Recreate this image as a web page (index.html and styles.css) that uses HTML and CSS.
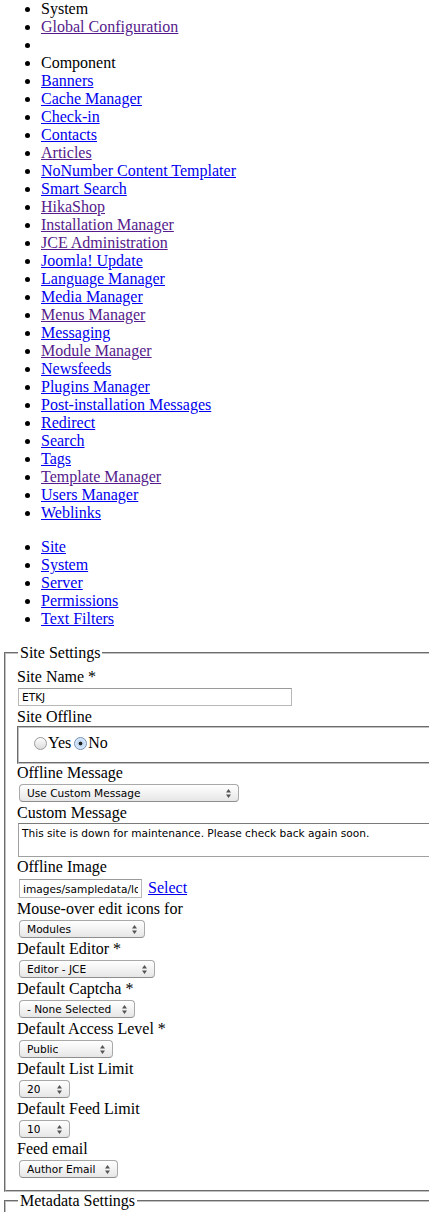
FILE: index.html
```html
<!DOCTYPE html>
<html>
<head>
<meta charset="utf-8">
<title>Global Configuration</title>
<link rel="stylesheet" href="styles.css">
</head>
<body>
<ul class="menu">
  <li>System</li>
  <li><a class="visited" href="#">Global Configuration</a></li>
  <li class="empty"></li>
  <li>Component</li>
  <li><a href="#">Banners</a></li>
  <li><a href="#">Cache Manager</a></li>
  <li><a href="#">Check-in</a></li>
  <li><a href="#">Contacts</a></li>
  <li><a class="visited" href="#">Articles</a></li>
  <li><a href="#">NoNumber Content Templater</a></li>
  <li><a href="#">Smart Search</a></li>
  <li><a class="visited" href="#">HikaShop</a></li>
  <li><a class="visited" href="#">Installation Manager</a></li>
  <li><a class="visited" href="#">JCE Administration</a></li>
  <li><a href="#">Joomla! Update</a></li>
  <li><a href="#">Language Manager</a></li>
  <li><a href="#">Media Manager</a></li>
  <li><a class="visited" href="#">Menus Manager</a></li>
  <li><a href="#">Messaging</a></li>
  <li><a class="visited" href="#">Module Manager</a></li>
  <li><a href="#">Newsfeeds</a></li>
  <li><a href="#">Plugins Manager</a></li>
  <li><a href="#">Post-installation Messages</a></li>
  <li><a href="#">Redirect</a></li>
  <li><a href="#">Search</a></li>
  <li><a href="#">Tags</a></li>
  <li><a class="visited" href="#">Template Manager</a></li>
  <li><a href="#">Users Manager</a></li>
  <li><a href="#">Weblinks</a></li>
</ul>

<ul class="tabs">
  <li><a href="#">Site</a></li>
  <li><a href="#">System</a></li>
  <li><a href="#">Server</a></li>
  <li><a href="#">Permissions</a></li>
  <li><a href="#">Text Filters</a></li>
</ul>

<fieldset class="group">
  <legend>Site Settings</legend>

  <div class="label">Site Name *</div>
  <input class="text w-name" type="text" value="ETKJ">

  <div class="label">Site Offline</div>
  <fieldset class="radios">
    <input class="radio" type="radio" name="offline"><label>Yes</label><input class="radio" type="radio" name="offline" checked><label>No</label>
  </fieldset>

  <div class="label">Offline Message</div>
  <div class="select w-220"><span>Use Custom Message</span><svg class="arrows" width="5" height="9" viewBox="0 0 5 9"><path d="M0 3.5 L2.5 0 L5 3.5 Z M0 5.5 L2.5 9 L5 5.5 Z" fill="#555"/></svg></div>

  <div class="label">Custom Message</div>
  <div class="textarea">This site is down for maintenance. Please check back again soon.</div>

  <div class="label">Offline Image</div>
  <div class="image-row">
    <input class="text w-img" type="text" value="images/sampledata/logo.png">
    <a href="#" class="select-link">Select</a>
  </div>

  <div class="label">Mouse-over edit icons for</div>
  <div class="select w-126"><span>Modules</span><svg class="arrows" width="5" height="9" viewBox="0 0 5 9"><path d="M0 3.5 L2.5 0 L5 3.5 Z M0 5.5 L2.5 9 L5 5.5 Z" fill="#555"/></svg></div>

  <div class="label">Default Editor *</div>
  <div class="select w-136"><span>Editor - JCE</span><svg class="arrows" width="5" height="9" viewBox="0 0 5 9"><path d="M0 3.5 L2.5 0 L5 3.5 Z M0 5.5 L2.5 9 L5 5.5 Z" fill="#555"/></svg></div>

  <div class="label">Default Captcha *</div>
  <div class="select w-116"><span>- None Selected</span><svg class="arrows" width="5" height="9" viewBox="0 0 5 9"><path d="M0 3.5 L2.5 0 L5 3.5 Z M0 5.5 L2.5 9 L5 5.5 Z" fill="#555"/></svg></div>

  <div class="label">Default Access Level *</div>
  <div class="select w-94"><span>Public</span><svg class="arrows" width="5" height="9" viewBox="0 0 5 9"><path d="M0 3.5 L2.5 0 L5 3.5 Z M0 5.5 L2.5 9 L5 5.5 Z" fill="#555"/></svg></div>

  <div class="label">Default List Limit</div>
  <div class="select w-51"><span>20</span><svg class="arrows" width="5" height="9" viewBox="0 0 5 9"><path d="M0 3.5 L2.5 0 L5 3.5 Z M0 5.5 L2.5 9 L5 5.5 Z" fill="#555"/></svg></div>

  <div class="label">Default Feed Limit</div>
  <div class="select w-51"><span>10</span><svg class="arrows" width="5" height="9" viewBox="0 0 5 9"><path d="M0 3.5 L2.5 0 L5 3.5 Z M0 5.5 L2.5 9 L5 5.5 Z" fill="#555"/></svg></div>

  <div class="label">Feed email</div>
  <div class="select w-99"><span>Author Email</span><svg class="arrows" width="5" height="9" viewBox="0 0 5 9"><path d="M0 3.5 L2.5 0 L5 3.5 Z M0 5.5 L2.5 9 L5 5.5 Z" fill="#555"/></svg></div>
</fieldset>

<fieldset class="group">
  <legend>Metadata Settings</legend>
  <div class="label">Site Meta Description</div>
</fieldset>
</body>
</html>
```

FILE: styles.css
```css
html {
  overflow-x: hidden;
}

body {
  margin: 0 2px;
  font-family: "Liberation Serif", "Times New Roman", serif;
  font-size: 16px;
  line-height: 18px;
  color: #000;
  background: #fff;
  width: 640px;
}

a {
  color: #0000ee;
  text-decoration: underline;
}

a.visited {
  color: #551a8b;
}

ul {
  margin: 0;
  padding-left: 39px;
  list-style: disc;
}

.menu li.empty {
  min-height: 18px;
}

.tabs {
  margin: 16px 0;
}

.group {
  margin: 0 2px;
  padding: 6px 12px 10px 11px;
  border: 2px groove #c0c0c0;
  min-width: 0;
}

.group legend {
  padding: 0 2px;
  margin-left: 1px;
}

.label {
  height: 18px;
}

.text {
  display: block;
  box-sizing: border-box;
  height: 18px;
  margin: 2px 0 2px 1px;
  padding: 0 3px;
  border: 1px solid #b8b8b8;
  border-top-color: #9a9a9a;
  font-family: "DejaVu Sans", "Liberation Sans", sans-serif;
  font-size: 10.6px;
  color: #000;
  background: #fff;
  outline: none;
}

.w-name {
  width: 274px;
}

.radios {
  margin: 0;
  padding: 6px 12px 10px;
  border: 2px groove #c0c0c0;
  height: 18px;
  display: flex;
  align-items: center;
}

.radio {
  appearance: none;
  -webkit-appearance: none;
  box-sizing: border-box;
  width: 13px;
  height: 13px;
  margin: 0 1px 0 3px;
  border: 1px solid #9a9a9a;
  border-radius: 50%;
  background: linear-gradient(#fdfdfd, #dcdcdc);
}

.radio:checked {
  border-color: #6f8fb8;
  background: radial-gradient(circle, #222 0, #222 1.6px, #bcd5f2 2.2px, #e4eefa 6px);
}

.radios label {
  line-height: 18px;
}

.select {
  display: flex;
  align-items: center;
  justify-content: space-between;
  box-sizing: border-box;
  height: 18px;
  margin: 2px 0 2px 2px;
  padding: 0 7px 0 7px;
  border: 1px solid #a9a9a9;
  border-bottom-color: #8e8e8e;
  border-radius: 4px;
  background: linear-gradient(#ffffff, #f3f3f3 50%, #e6e6e6);
  font-family: "DejaVu Sans", "Liberation Sans", sans-serif;
  font-size: 10.6px;
  line-height: 16px;
  color: #000;
}

.select span {
  white-space: nowrap;
  overflow: hidden;
}

.arrows {
  flex: none;
  display: block;
  margin-left: 4px;
}

.w-220 { width: 220px; }
.w-126 { width: 126px; }
.w-136 { width: 136px; }
.w-116 { width: 116px; }
.w-94 { width: 94px; }
.w-51 { width: 51px; }
.w-99 { width: 99px; }

.textarea {
  box-sizing: border-box;
  width: 560px;
  height: 34px;
  margin: 1px 0 1px 1px;
  padding: 3px 3px;
  border: 1px solid #a0a0a0;
  border-top-color: #7a7a7a;
  font-family: "DejaVu Sans", "Liberation Sans", sans-serif;
  font-size: 10.6px;
  line-height: 13px;
  color: #000;
}

.image-row {
  display: flex;
  align-items: center;
  height: 24px;
}

.image-row .text {
  width: 123px;
  height: 19px;
  margin: 1px 6px 0 2px;
}

.select-link {
  line-height: 18px;
}
```
